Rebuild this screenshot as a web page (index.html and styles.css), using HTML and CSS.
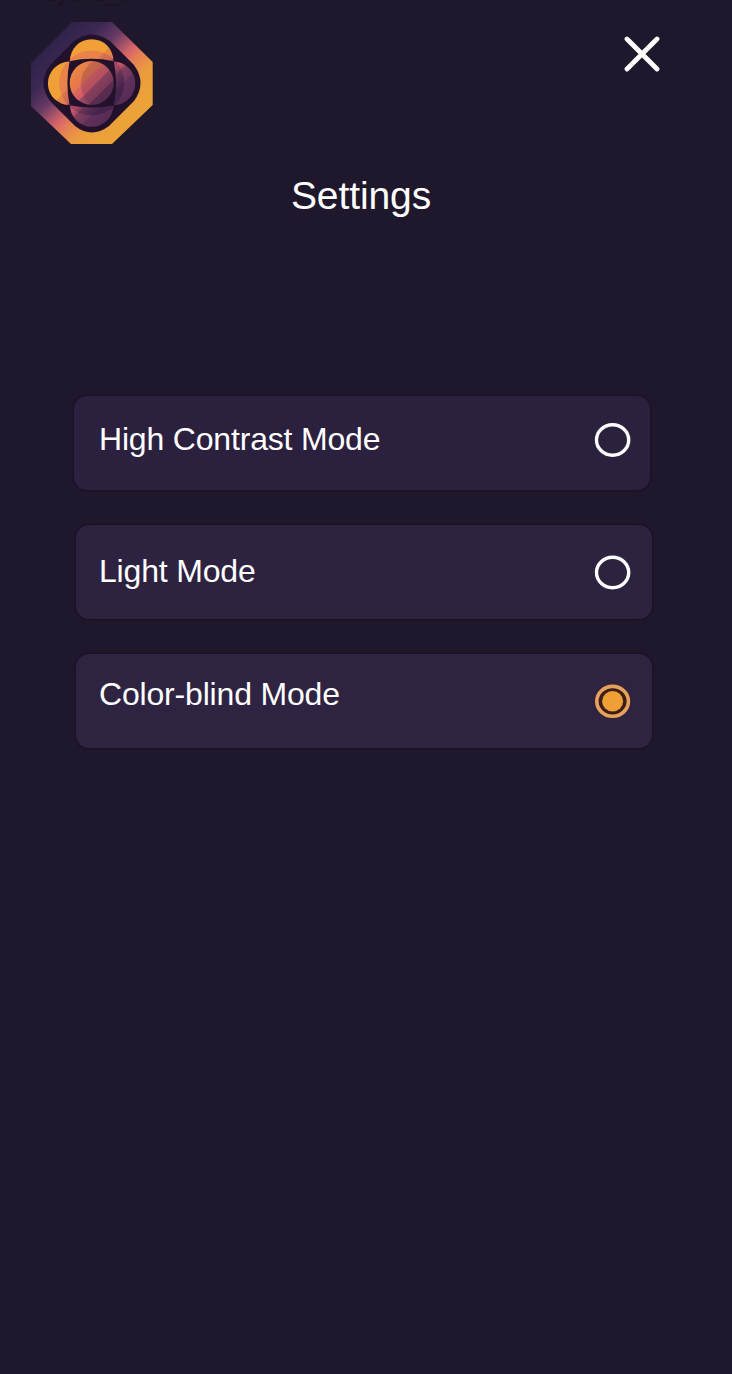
FILE: index.html
```html
<!DOCTYPE html>
<html lang="en">
<head>
<meta charset="utf-8">
<title>Settings</title>
<link rel="stylesheet" href="styles.css">
</head>
<body>
<main class="screen">
  <div class="caption" aria-hidden="true">Psycho_...</div>
  <header class="header">
    <svg class="logo" viewBox="0 0 122 122" role="img" aria-label="Logo">
      <defs>
        <linearGradient id="frame" gradientUnits="userSpaceOnUse" x1="20" y1="22" x2="96" y2="98">
          <stop offset="0" stop-color="#30234a"/>
          <stop offset=".2" stop-color="#3b2852"/>
          <stop offset=".37" stop-color="#653a63"/>
          <stop offset=".56" stop-color="#d5646a"/>
          <stop offset=".65" stop-color="#e57f55"/>
          <stop offset=".8" stop-color="#eb9c3c"/>
          <stop offset="1" stop-color="#eca238"/>
        </linearGradient>
        <linearGradient id="bands" gradientUnits="userSpaceOnUse" x1="30" y1="30" x2="90" y2="90">
          <stop offset=".36" stop-color="#f0a037"/>
          <stop offset=".36" stop-color="#e88b40"/>
          <stop offset=".49" stop-color="#e27c50"/>
          <stop offset=".49" stop-color="#b45163"/>
          <stop offset=".57" stop-color="#b9536a"/>
          <stop offset=".57" stop-color="#d25c68"/>
          <stop offset=".65" stop-color="#a04864"/>
          <stop offset=".65" stop-color="#81405f"/>
          <stop offset=".78" stop-color="#6c365b"/>
          <stop offset=".78" stop-color="#5e2f5a"/>
          <stop offset="1" stop-color="#572b55"/>
        </linearGradient>
        <linearGradient id="halo" gradientUnits="userSpaceOnUse" x1="38" y1="38" x2="84" y2="84">
          <stop offset=".25" stop-color="#df5f62" stop-opacity=".45"/>
          <stop offset=".55" stop-color="#7b2f5c" stop-opacity=".35"/>
          <stop offset=".8" stop-color="#2b1a42" stop-opacity=".5"/>
        </linearGradient>
        <linearGradient id="core" gradientUnits="userSpaceOnUse" x1="38" y1="38" x2="83" y2="83">
          <stop offset="0" stop-color="#ee9240"/>
          <stop offset=".42" stop-color="#e3744c"/>
          <stop offset=".42" stop-color="#dd6660"/>
          <stop offset=".56" stop-color="#cf5d68"/>
          <stop offset=".56" stop-color="#9c4a60"/>
          <stop offset=".72" stop-color="#85405a"/>
          <stop offset=".72" stop-color="#5d2f54"/>
          <stop offset="1" stop-color="#4e294e"/>
        </linearGradient>
        <clipPath id="petals">
          <circle cx="60.7" cy="39" r="21.8"/><circle cx="38.7" cy="61.3" r="21.8"/>
          <circle cx="82.5" cy="61.3" r="21.8"/><circle cx="60.7" cy="83" r="21.8"/>
        </clipPath>
        <clipPath id="center"><circle cx="60.7" cy="61" r="22"/></clipPath>
      </defs>
      <path fill="url(#frame)" d="M41 0H81L121.700 40V83L81 122H40L0 84V41Z"/>
      <path fill="#22112a" d="M43 19Q60.7 6 79 19L103 43Q116 61 103 79L78 104Q60.7 117 44 104L19 79Q6 61 19 43Z"/>
      <g clip-path="url(#petals)">
        <path fill="url(#bands)" d="M10 10H112V112H10Z"/>
        <circle cx="60.7" cy="61" r="32.5" fill="url(#halo)"/>
      </g>
      <path fill="#22112a" d="M38.6 39.2Q60.7 34.5 82.8 39.2Q87.3 61 82.8 83.2Q60.7 87.7 38.6 83.2Q34.2 61 38.6 39.2Z"/>
      <g clip-path="url(#center)">
        <path fill="url(#core)" d="M38 38H84V84H38Z"/>
        <circle cx="78" cy="62" r="28" fill="#54264f" fill-opacity=".24"/>
      </g>
    </svg>
    <button class="close" type="button" aria-label="Close">
      <svg viewBox="0 0 36 36"><path d="M3 3L33 33M33 3L3 33"/></svg>
    </button>
  </header>
  <h1 class="title">Settings</h1>
  <div class="options" role="radiogroup" aria-label="Settings">
    <div class="option option-contrast" role="radio" aria-checked="false">
      <span class="label">High Contrast Mode</span>
      <svg class="radio" viewBox="0 0 36 34"><ellipse class="ring" cx="17.600" cy="17" rx="16.1" ry="15.2"/></svg>
    </div>
    <div class="option option-light" role="radio" aria-checked="false">
      <span class="label">Light Mode</span>
      <svg class="radio" viewBox="0 0 36 34"><ellipse class="ring" cx="17.600" cy="17.500" rx="16.1" ry="15.2"/></svg>
    </div>
    <div class="option option-color" role="radio" aria-checked="true">
      <span class="label">Color-blind Mode</span>
      <svg class="radio" viewBox="0 0 36 34">
        <ellipse class="disc-edge" cx="17.600" cy="17.300" rx="18" ry="17.300"/>
        <ellipse class="disc-ring" cx="17.600" cy="17.300" rx="15.8" ry="14.900"/>
        <ellipse class="disc-dot" cx="17.600" cy="17.300" rx="10.5" ry="10.3"/>
      </svg>
    </div>
  </div>
</main>
</body>
</html>
```
FILE: styles.css
```css
* { box-sizing: border-box; }
body { margin: 0; background: #1f172c; }
.screen {
  position: relative;
  height: 1374px;
  overflow: hidden;
  background: #1f172c;
  color: #fff;
  font-family: "Liberation Sans", Arial, sans-serif;
}
.caption {
  position: absolute;
  top: -19px;
  left: 30px;
  font-size: 23px;
  line-height: 24px;
  color: #191223;
}
.header {
  display: flex;
  justify-content: space-between;
  align-items: flex-start;
  padding: 22px 72px 0 31px;
}
.logo { display: block; width: 122px; height: 122px; }
.close {
  width: 36px;
  height: 36px;
  margin-top: 14px;
  padding: 0;
  border: 0;
  background: none;
}
.close svg { display: block; width: 36px; height: 36px; }
.close path { stroke: #fff; stroke-width: 4.8; stroke-linecap: round; }
.title {
  margin: 30px 0 0;
  padding-right: 10px;
  font-size: 39px;
  line-height: 44px;
  font-weight: 400;
  letter-spacing: -0.1px;
  text-align: center;
}
.options {
  display: grid;
  gap: 35px;
  padding: 178px 80px 0 74px;
}
.option {
  display: flex;
  align-items: flex-start;
  justify-content: space-between;
  width: 576px;
  height: 94px;
  border-radius: 13px;
  background: #2c203f;
  box-shadow: 0 0 1.500px 1px #191122;
}
.option-contrast { padding: 27px 19px 0 25px; }
.option-light { margin-left: 2px; padding: 30px 21px 0 23px; background: #2d2240; }
.option-color { margin-left: 2px; padding: 30px 21px 0 23px; background: #2e2442; }
.label {
  margin-top: -2px;
  font-size: 32px;
  line-height: 36px;
  letter-spacing: -0.18px;
  white-space: nowrap;
}
.option-color .label { margin-top: -8px; }
.radio { flex: none; width: 36px; height: 34px; overflow: visible; }
.ring { fill: none; stroke: #fff; stroke-width: 3.4; }
.disc-edge { fill: #482018; }
.disc-ring { fill: #3d1d18; stroke: #e3a260; stroke-width: 3.6; }
.disc-dot { fill: #eea037; }
```
